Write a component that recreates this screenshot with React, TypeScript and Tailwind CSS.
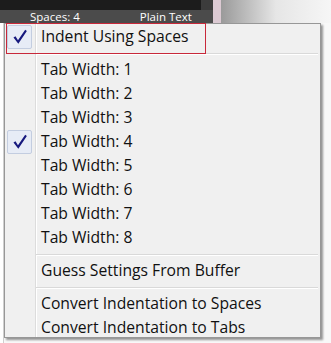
import React from 'react';

const font = { fontFamily: '"Open Sans", "Noto Sans", sans-serif' };

function Check() {
    return (
        <div className="w-[25px] h-[24px] flex items-center justify-center bg-[#e7ecf6] border border-[#c3cde0] rounded-[2px]">
            <svg width="18" height="18" viewBox="0 0 16 16">
                <path d="M2.2 8.4 L4 7.3 L6.2 10.9 L12.6 1.6 L14.1 2.6 L6.5 13.9 Z" fill="#17197e" />
            </svg>
        </div>
    );
}

function Item({ label, checked }: { label: string; checked?: boolean }) {
    return (
        <div className="h-[24px] flex items-center">
            <div className="w-[36px] pl-[2px] flex items-center">{checked && <Check />}</div>
            <span className="text-[15.7px] text-[#111] leading-none whitespace-nowrap">{label}</span>
        </div>
    );
}

function Separator() {
    return (
        <div className="h-[9px] flex flex-col justify-center pl-[31px] pr-[2px]">
            <div className="h-px bg-[#d9d9d9]" />
            <div className="h-px bg-white" />
        </div>
    );
}

export default function App() {
    const widths = [1, 2, 3, 4, 5, 6, 7, 8];

    return (
        <div className="relative w-[331px] h-[343px] overflow-hidden bg-[#f8f8f8]" style={font}>
            {/* editor window behind */}
            <div className="flex h-[23px]">
                <div className="w-[213px] flex flex-col">
                    <div className="h-[10px] bg-[#1c1c1c] flex justify-end">
                        <div className="w-[12px] bg-[#3c3c3c]" />
                    </div>
                    <div className="flex-1 bg-[#4b4b4b] flex items-center text-[11.5px] text-white leading-none">
                        <span className="ml-[30px]">Spaces: 4</span>
                        <span className="ml-[60px]">Plain Text</span>
                    </div>
                </div>
                <div className="w-[8px] bg-[#dccad3]" />
                <div className="flex-1 bg-gradient-to-r from-[#9a9a9a] via-[#e6e6e6] to-[#f6f6f6]" />
            </div>
            <div className="flex h-[320px]">
                <div className="w-[4px] bg-white border-r border-[#cfcfcf]" />
            </div>

            {/* popup menu */}
            <div className="absolute left-[4px] top-[23px] w-[317px] h-[315px] bg-[#f0f0f0] border border-[#979797] shadow-[2px_2px_2px_rgba(0,0,0,0.4)]">
                <div className="absolute left-[30px] top-0 bottom-0 flex">
                    <div className="w-px bg-[#dcdcdc]" />
                    <div className="w-px bg-white" />
                </div>
                <div className="relative flex flex-col pt-[1px]">
                    <Item label="Indent Using Spaces" checked />
                    <Separator />
                    {widths.map((w) => (
                        <Item key={w} label={`Tab Width: ${w}`} checked={w === 4} />
                    ))}
                    <Separator />
                    <Item label="Guess Settings From Buffer" />
                    <Separator />
                    <Item label="Convert Indentation to Spaces" />
                    <Item label="Convert Indentation to Tabs" />
                </div>
            </div>

            {/* red annotation box */}
            <div className="absolute left-[6px] top-[23px] w-[200px] h-[31px] border-[1.5px] border-[#c8283a]" />
        </div>
    );
}
